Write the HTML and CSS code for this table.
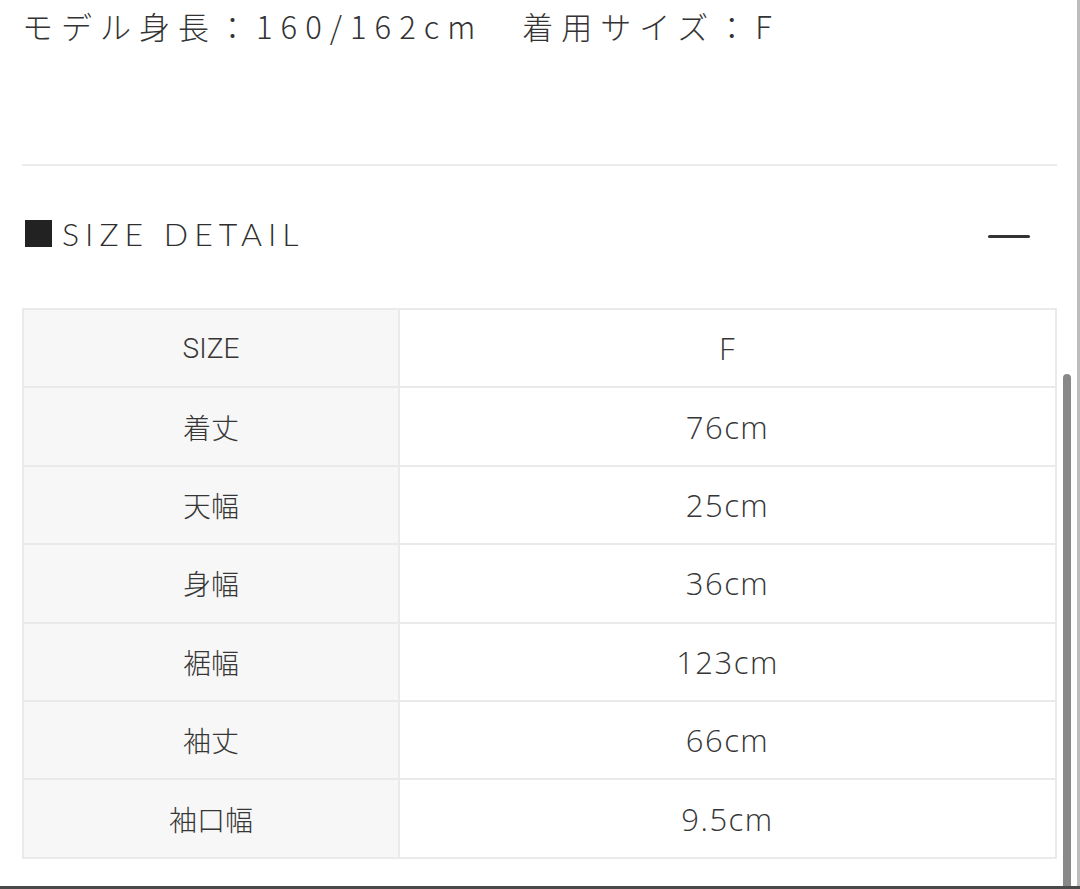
FILE: index.html
```html
<!DOCTYPE html>
<html lang="ja">
<head>
<meta charset="utf-8">
<title>SIZE DETAIL</title>
<link rel="stylesheet" href="styles.css">
</head>
<body>
<div class="page">
  <p class="model-info">モデル身長：160/162cm　着用サイズ：F</p>
  <div class="divider"></div>
  <div class="section-head">
    <h2 class="section-title"><span class="square"></span>SIZE DETAIL</h2>
    <span class="minus"></span>
  </div>
  <table class="size-table">
    <tr><th>SIZE</th><td>F</td></tr>
    <tr><th>着丈</th><td>76cm</td></tr>
    <tr><th>天幅</th><td>25cm</td></tr>
    <tr><th>身幅</th><td>36cm</td></tr>
    <tr><th>裾幅</th><td>123cm</td></tr>
    <tr><th>袖丈</th><td>66cm</td></tr>
    <tr><th>袖口幅</th><td>9.5cm</td></tr>
  </table>
</div>
<div class="scroll-track"></div>
<div class="scroll-thumb"></div>
<div class="bottom-edge"></div>
</body>
</html>
```
FILE: styles.css
```css
html, body {
  margin: 0;
  padding: 0;
  background: #fff;
  height: 889px;
  overflow: hidden;
}
body {
  position: relative;
  font-family: "Noto Sans CJK JP", "Noto Sans", sans-serif;
  color: #333;
}
.page {
  padding: 0 23px 0 22px;
}
.model-info {
  margin: 0;
  font-size: 31px;
  font-weight: 300;
  line-height: 52px;
  letter-spacing: 8px;
  color: #333;
  white-space: nowrap;
}
.divider {
  margin-top: 112px;
  height: 2px;
  background: #ececec;
}
.section-head {
  display: flex;
  align-items: center;
  justify-content: space-between;
  padding: 50px 0 58px;
  height: 34px;
}
.section-title {
  margin: 0;
  display: flex;
  align-items: center;
  font-family: "Lato", sans-serif;
  font-weight: 300;
  font-size: 32px;
  letter-spacing: 6px;
  color: #2e2e2e;
}
.square {
  width: 27px;
  height: 27px;
  background: #222;
  margin: 0 10px 0 3px;
}
.minus {
  width: 42px;
  height: 3px;
  background: #333;
  border-radius: 2px;
  margin: 7px 27px 0 0;
}
.size-table {
  width: 100%;
  border-collapse: collapse;
  table-layout: fixed;
}
.size-table th,
.size-table td {
  border: 2px solid #eaeaea;
  height: 76.4px;
  text-align: center;
  padding: 0;
  color: #363636;
}
.size-table th {
  width: 374px;
  background: #f7f7f7;
  font-family: "Roboto", "Noto Sans CJK JP", sans-serif;
  font-weight: 300;
  font-size: 28px;
}
.size-table td {
  background: #fff;
  font-family: "Open Sans", sans-serif;
  font-weight: 300;
  font-size: 31px;
  letter-spacing: 1.5px;
}
.scroll-track {
  position: absolute;
  top: 0;
  right: 0;
  width: 3px;
  height: 889px;
  background: #bdbdbd;
}
.scroll-thumb {
  position: absolute;
  top: 374px;
  left: 1063px;
  width: 8px;
  height: 530px;
  border-radius: 4px;
  background: #888;
}
.bottom-edge {
  position: absolute;
  left: 0;
  bottom: 0;
  width: 100%;
  height: 3px;
  background: #4a4a4a;
}
```
